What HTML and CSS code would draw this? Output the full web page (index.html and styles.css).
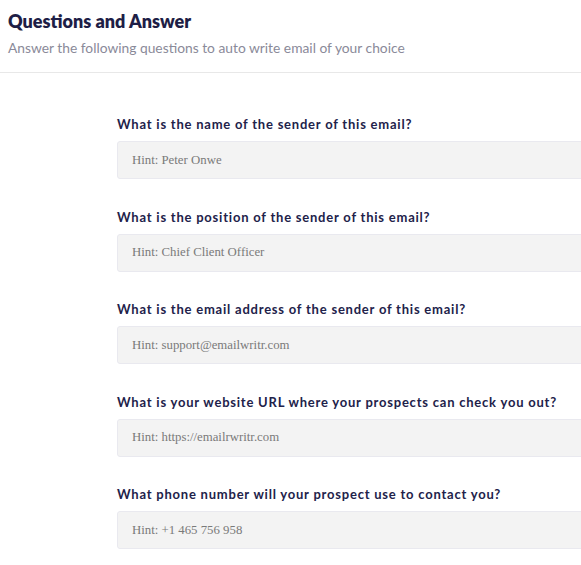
FILE: index.html
```html
<!doctype html>
<html lang="en">
	<head>
		<title>Questions and Answer</title>
		<meta charset="utf-8">
		<link rel="stylesheet" href="styles.css">
	</head>
	<body>
<div class="header">
	<h1>Questions and Answer</h1>
	<p>Answer the following questions to auto write email of your choice</p>
</div>
<div class="form">
	<div class="field">
		<label>What is the name of the sender of this email?</label>
		<input type="text" placeholder="Hint: Peter Onwe">
	</div>
	<div class="field">
		<label>What is the position of the sender of this email?</label>
		<input type="text" placeholder="Hint: Chief Client Officer">
	</div>
	<div class="field">
		<label>What is the email address of the sender of this email?</label>
		<input type="text" placeholder="Hint: support@emailwritr.com">
	</div>
	<div class="field">
		<label>What is your website URL where your prospects can check you out?</label>
		<input type="text" placeholder="Hint: https://emailrwritr.com">
	</div>
	<div class="field">
		<label>What phone number will your prospect use to contact you?</label>
		<input type="text" placeholder="Hint: +1 465 756 958">
	</div>
</div>
	</body>
</html>
```

FILE: styles.css
```css
*{
	box-sizing: border-box;
	margin: 0;
	padding: 0;
}
body {
	background: #ffffff;
	font-family: Lato, sans-serif;
	overflow: hidden;
}
.header { padding: 10px 8px 15px; border-bottom: 1px solid #e8e8e8; }
.header h1 { font-size: 18px; font-weight: 800; color: #1e1e46; line-height: 22px; }
.header p { font-size: 13.8px; color: #8a8a99; line-height: 18px; margin-top: 7px; }
.form { padding: 42px 0 0 117px; width: 620px; }
.field { display: flex; flex-direction: column; margin-bottom: 28.5px; }
.field label { font-size: 13px; font-weight: 700; color: #22224a; letter-spacing: 0.78px; line-height: 18px; margin-bottom: 8px; }
.field input {
	height: 38px;
	width: 100%;
	background: #f3f3f3;
	border: 1px solid #e9e9ef;
	border-radius: 3px;
	padding: 0 14px;
	font-family: "Liberation Serif", serif;
	font-size: 12.8px;
	outline: none;
}
.field input::placeholder { color: #7a7a7a; }
```
